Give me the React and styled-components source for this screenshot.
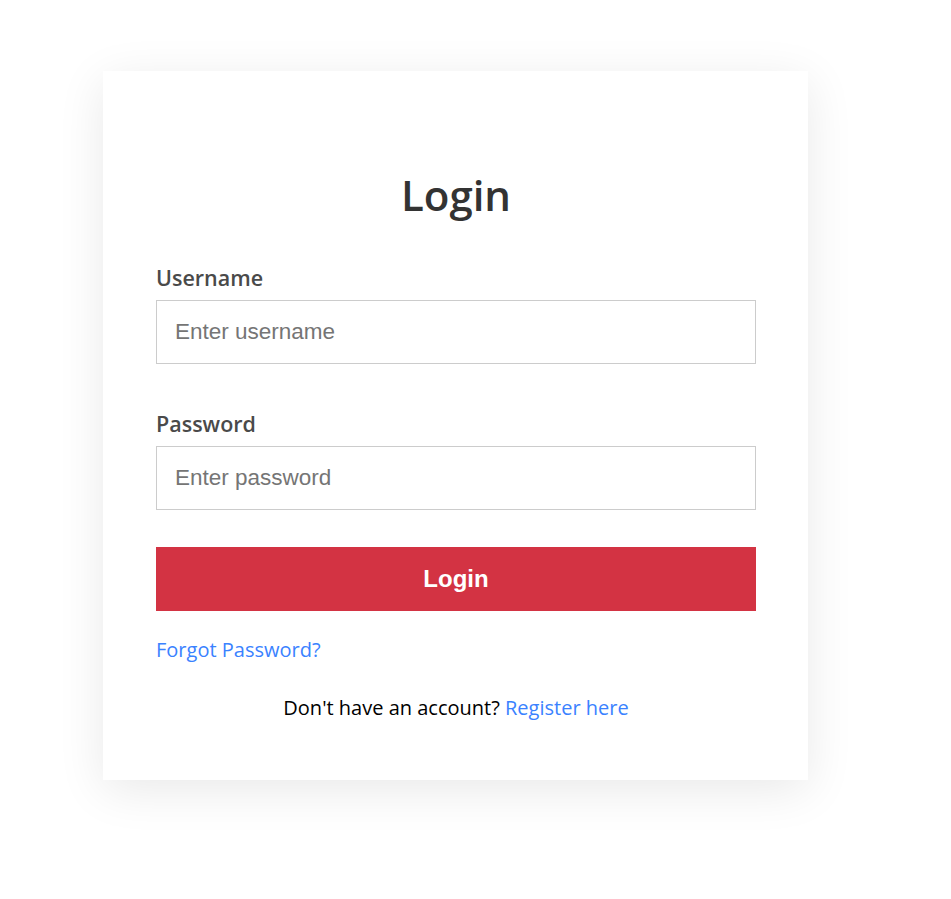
import React from 'react';
import styled, { createGlobalStyle } from 'styled-components';

const GlobalStyle = createGlobalStyle`
  body {
    margin: 0;
    background: #fff;
    font-family: "Open Sans", "Noto Sans", sans-serif;
  }
`;

const Page = styled.div`
  padding: 71px 0 0 103px;
  min-height: 899px;
  box-sizing: border-box;
`;

const Card = styled.div`
  width: 705px;
  height: 709px;
  box-sizing: border-box;
  padding: 94px 52px 0 53px;
  background: #fff;
  box-shadow: 0 10px 45px rgba(0, 0, 0, 0.09);
`;

const Title = styled.h1`
  margin: 0 0 39px;
  text-align: center;
  font-size: 42px;
  line-height: 60px;
  font-weight: 600;
  color: #333;
`;

const Field = styled.div`
  display: flex;
  flex-direction: column;
  margin-bottom: ${p => p.$gap || 46}px;
`;

const Label = styled.label`
  font-size: 21.5px;
  line-height: 28px;
  font-weight: 600;
  color: #4a4a4a;
  margin-bottom: 8px;
`;

const Input = styled.input`
  height: 64px;
  box-sizing: border-box;
  border: 1px solid #ccc;
  padding: 0 18px;
  font-family: "Liberation Sans", Arial, sans-serif;
  font-size: 22.5px;
  color: #333;
  outline: none;
  &::placeholder {
    color: #757575;
  }
`;

const Button = styled.button`
  height: 64px;
  width: 100%;
  border: none;
  background: #d33343;
  color: #fff;
  font-family: "Liberation Sans", Arial, sans-serif;
  font-size: 24px;
  font-weight: 700;
  cursor: pointer;
`;

const Link = styled.a`
  color: #3a82ff;
  text-decoration: none;
  cursor: pointer;
`;

const Forgot = styled.div`
  margin-top: 25px;
  font-size: 20px;
  line-height: 28px;
`;

const Register = styled.p`
  margin: 30px 0 0;
  text-align: center;
  font-size: 20px;
  line-height: 28px;
  color: #000;
`;

export default function App() {
  return (
    <Page>
      <GlobalStyle />
      <Card>
        <Title>Login</Title>
        <Field>
          <Label>Username</Label>
          <Input type="text" placeholder="Enter username" />
        </Field>
        <Field $gap={37}>
          <Label>Password</Label>
          <Input type="password" placeholder="Enter password" />
        </Field>
        <Button>Login</Button>
        <Forgot>
          <Link>Forgot Password?</Link>
        </Forgot>
        <Register>
          Don't have an account? <Link>Register here</Link>
        </Register>
      </Card>
    </Page>
  );
}
